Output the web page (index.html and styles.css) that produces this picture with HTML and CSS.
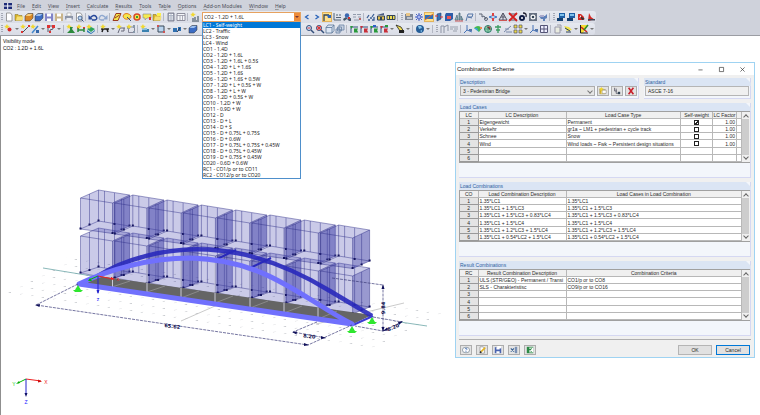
FILE: index.html
```html
<!DOCTYPE html>
<html lang="en">
<head>
<meta charset="utf-8">
<title>Combination Scheme</title>
<link rel="stylesheet" href="styles.css">
</head>
<body>
<header class="chrome">
  <nav class="menu">
    <svg class="app" viewBox="0 0 8 6" aria-hidden="true"><path fill="#1c2a78" d="M0 0h8v6H0z"/><path fill="#fff" d="M0 2.500h8v1H0zM3.200 0h1v6h-1z"/></svg>
    <a href="#"><u>F</u>ile</a><a href="#"><u>E</u>dit</a><a href="#"><u>V</u>iew</a><a href="#"><u>I</u>nsert</a><a href="#"><u>C</u>alculate</a><a href="#"><u>R</u>esults</a><a href="#"><u>T</u>ools</a><a href="#">Ta<u>b</u>le</a><a href="#"><u>O</u>ptions</a><a href="#"><u>A</u>dd-on Modules</a><a href="#"><u>W</u>indow</a><a href="#"><u>H</u>elp</a>
  </nav>
  <div class="bar">
    <div class="tools" data-tools="grip new open box boxb save saveas print preview | undo redo | plane lasso target tag folder | calc grid | load"></div>
    <div class="picker">
      <select class="combo" aria-label="Load case"><option>CO2 - 1.2D + 1.6L</option></select>
      <select class="list" size="26" aria-label="Load cases and combinations">
        <option selected>LC1 - Self-weight</option><option>LC2 - Traffic</option><option>LC3 - Snow</option><option>LC4 - Wind</option><option>CO1 - 1.4D</option><option>CO2 - 1.2D + 1.6L</option><option>CO3 - 1.2D + 1.6L + 0.5S</option><option>CO4 - 1.2D + L + 1.6S</option><option>CO5 - 1.2D + 1.6S</option><option>CO6 - 1.2D + 1.6S + 0.5W</option><option>CO7 - 1.2D + L + 0.5S + W</option><option>CO8 - 1.2D + L + W</option><option>CO9 - 1.2D + 0.5S + W</option><option>CO10 - 1.2D + W</option><option>CO11 - 0.9D + W</option><option>CO12 - D</option><option>CO13 - D + L</option><option>CO14 - D + S</option><option>CO15 - D + 0.75L + 0.75S</option><option>CO16 - D + 0.6W</option><option>CO17 - D + 0.75L + 0.75S + 0.45W</option><option>CO18 - D + 0.75L + 0.45W</option><option>CO19 - D + 0.75S + 0.45W</option><option>CO20 - 0.6D + 0.6W</option><option>RC1 - CO1/p or to CO11</option><option>RC2 - CO12/p or to CO20</option>
      </select>
    </div>
    <div class="tools" data-tools="prev next *loadlbl dims render values | glasses sect1 sect2 | grip card cross *beam cut slab mirror flag | link rotate tri delete sphere camera pig | grip mon mon pdf pdf2"></div>
  </div>
  <div class="bar">
    <div class="tools" data-tools="grip node v line lineb v poly v | figure green solid | hinge v flagb rect | setb v frame v extr v boxb"></div>
    <div class="gap"></div>
    <div class="tools" data-tools="zoom zoomx cube cubes | axx axy axz axr v hand v | globe v | grip portal vals | axis rainbow mesh tree line3 four v axis table | doc pencil v chart v"></div>
  </div>
</header>
<main class="view">
  <svg class="model" viewBox="0 0 455 379" aria-label="Pedestrian bridge model">
    <defs>
      <pattern id="dots" width="11" height="11" patternUnits="userSpaceOnUse" patternTransform="matrix(1 .15 -1 .5 98 240)"><circle cx="2" cy="2" r=".7" fill="#a9acb4"/></pattern>
      <g id="upper"><path class="glass" d="M0 0 18-8 49-3V28L32 35.500 0 31Z"/><path class="side" d="M32 5 49-3V28L32 35.500Z"/><path class="edge" d="M0 0 18-8 49-3 32 5ZM0 0V31L32 35.500V5M49-3V28L32 35.500M18-8V23L0 31M18 23 49 28M9-4V27M24-7V24M34-5V26M41 1V32"/><path class="tips" d="M0 29.500v2M32 34v2M49 26.500v2M18 21.500v2M9 25.500v2M41 30.500v2M34 25v2"/></g>
      <g id="lower"><path class="glass" d="M0 0 18-8 49-3V36L32 43 0 37Z"/><path class="side" d="M32 5 49-3V36L32 43Z"/><path class="edge" d="M0 0 18-8 49-3 32 5ZM0 0V37L32 43V5M49-3V36L32 43M18-8V31L0 37M18 31 49 36M9-4V34M24-7V32M34-5V34M41 1V39"/><path class="tips" d="M0 35.500v2M32 41v2M49 34.500v2M18 29.500v2M9 33v2M41 38v2M34 33v2"/></g>
      <path id="support" fill="#2fe62f" d="M0 0-3 5h6ZM-5 5H5L3 7H-3Z"/>
    </defs>
    <g transform="translate(0 -36)">
      <path fill="url(#dots)" d="M0 293 76 253 452 311 372 352Z"/>
      <path class="thin" stroke="#57999b" d="M43 268 98 277M400 322 427 326"/>
      <path class="thin" stroke="#b5b5b5" d="M181 321 240 295M316 324 404 303"/>
      <g id="lowers"></g>
      <path fill="#656565" d="M79 283 98 276 372 315 353 324Z"/>
      <path class="thin" stroke="#999" d="M112 287 130 281M147 292 165 286M181 298 199 291M215 303 233 296M250 308 268 301M284 313 302 306M318 319 337 311"/>
      <g id="uppers"></g>
      <path fill="none" stroke="#2929bb" stroke-opacity=".9" stroke-width="4.500" d="M98 276C123 260 165 247 208 249.500C262 252 307 277 330 291L372 316"/>
      <path fill="none" stroke="#2929bb" stroke-width="2" d="M215 260 236 250M250 268 271 258"/>
      <path fill="none" stroke="#c9c9d6" d="M112.500 272v16M147 261v31M181 258v39M215 260v42M250 269v38M284 286v27M318 306v12"/>
      <path fill="none" stroke="#3c3cd2" stroke-width="2" d="M353 325 373 316"/>
      <path fill="none" stroke="#7070fd" stroke-width="5" stroke-linejoin="round" d="M352 324 79 284C110 269 150 258 190 258C267 260 300 297 352 324Z"/>
      <use href="#support" x="78" y="285"/><use href="#support" x="352" y="326"/><use href="#support" x="372" y="317"/>
      <g class="dim"><path d="M78 284 36 305 308 345 352 325M317 322 293 332 326 338M332 278 383 285V331L355 326M373 317 402 322 383 331"/></g>
      <path fill="#11115a" d="M35 305 40 304 39.500 307ZM309 345 304 343 304 346ZM292 332 297 331.500 296.500 334.500ZM326 338 321 336 321 339ZM383 284 381.500 289h3ZM383 332 381.500 327h3ZM403 321 398 322 399 325ZM383 331 387 327.500 388 330.500Z"/>
      <g class="num"><text transform="translate(172 328) rotate(8)">65.62</text><text transform="translate(309 338) rotate(8)">8.20</text><text transform="translate(385 308) rotate(-90)">9.84</text><text transform="translate(394 329) rotate(-24)">8.20</text></g>
      <g class="triad"><path stroke="#e22" d="M98 276 113 279"/><path stroke="#0b0" d="M98 276 89 280"/><path stroke="#22c" d="M98 276V293"/><path fill="#e22" d="m115 279-4-2v3z"/><path fill="#0b0" d="m88 281 2-3 2 3z"/><path fill="#22c" d="m98 294-1.500-4h3z"/><text fill="#e22" x="118" y="281">x</text><text fill="#22f" x="98" y="301">z</text></g>
      <g class="triad"><path stroke="#e22" d="M26 379 41 381"/><path stroke="#0b0" d="M26 379 18 383"/><path stroke="#22c" d="M26 379V395"/><path fill="#c11" d="m42 381.500-4-2v3z"/><path fill="#0a0" d="m16 384 3-3 1 2z"/><path fill="#116" d="m26 397-1.500-4h3z"/><text fill="#e22" x="46" y="384">X</text><text fill="#1c1" x="14" y="386">Y</text><text fill="#22f" x="26" y="404">Z</text></g>
    </g>
  </svg>
  <p class="state">Visibility mode<br>CO2 : 1.2D + 1.6L</p>
</main>
<section class="dialog" role="dialog" aria-labelledby="ttl">
  <header class="title"><h1 id="ttl">Combination Scheme</h1>
    <button aria-label="Minimize"><svg viewBox="0 0 6 6"><path d="M.5 3.500h5"/></svg></button><button aria-label="Maximize"><svg viewBox="0 0 6 6"><path d="M.5.500h5v5h-5z"/></svg></button><button aria-label="Close"><svg viewBox="0 0 6 6"><path d="m.5.500 5 5M5.500.500l-5 5"/></svg></button>
  </header>
  <div class="body">
    <div class="top">
      <section class="group grow"><h2><label for="desc">Description</label></h2>
        <div class="row"><select id="desc"><option>3 - Pedestrian Bridge</option></select><button data-icon="newf" aria-label="New"></button><button data-icon="rename" aria-label="Rename"></button><button data-icon="del" aria-label="Delete"></button></div></section>
      <section class="group std"><h2><label for="std">Standard</label></h2><div class="row"><input id="std" value="ASCE 7-16" readonly></div></section>
    </div>
    <section class="group"><h2>Load Cases</h2>
      <div class="sheet"><table><colgroup><col class="n"><col class="d"><col><col class="sw"><col class="f"><col class="e"></colgroup>
        <thead><tr><th>LC</th><th>LC Description</th><th>Load Case Type</th><th>Self-weight</th><th>LC Factor</th><th></th></tr></thead>
        <tbody>
        <tr><th>1</th><td>Eigengewicht</td><td>Permanent</td><td class="c"><input type="checkbox" checked aria-label="Self-weight LC1"></td><td class="r">1.00</td><td></td></tr>
        <tr><th>2</th><td>Verkehr</td><td>gr1a ~ LM1 + pedestrian + cycle track</td><td class="c"><input type="checkbox" aria-label="Self-weight LC2"></td><td class="r">1.00</td><td></td></tr>
        <tr><th>3</th><td>Schnee</td><td>Snow</td><td class="c"><input type="checkbox" aria-label="Self-weight LC3"></td><td class="r">1.00</td><td></td></tr>
        <tr><th>4</th><td>Wind</td><td>Wind loads ~ Fwk ~ Persistent design situations</td><td class="c"><input type="checkbox" aria-label="Self-weight LC4"></td><td class="r">1.00</td><td></td></tr>
        <tr><th>5</th><td></td><td></td><td></td><td></td><td></td></tr>
        <tr><th>6</th><td></td><td></td><td></td><td></td><td></td></tr></tbody></table>
        <div class="scroll"></div></div></section>
    <section class="group"><h2>Load Combinations</h2>
      <div class="sheet"><table><colgroup><col class="n"><col class="d"><col></colgroup>
        <thead><tr><th>CO</th><th>Load Combination Description</th><th>Load Cases in Load Combination</th></tr></thead>
        <tbody>
        <tr><th>1</th><td>1.35*LC1</td><td>1.35*LC1</td></tr>
        <tr><th>2</th><td>1.35*LC1 + 1.5*LC3</td><td>1.35*LC1 + 1.5*LC3</td></tr>
        <tr><th>3</th><td>1.35*LC1 + 1.5*LC3 + 0.83*LC4</td><td>1.35*LC1 + 1.5*LC3 + 0.83*LC4</td></tr>
        <tr><th>4</th><td>1.35*LC1 + 1.5*LC4</td><td>1.35*LC1 + 1.5*LC4</td></tr>
        <tr><th>5</th><td>1.35*LC1 + 1.2*LC3 + 1.5*LC4</td><td>1.35*LC1 + 1.2*LC3 + 1.5*LC4</td></tr>
        <tr><th>6</th><td>1.35*LC1 + 0.54*LC2 + 1.5*LC4</td><td>1.35*LC1 + 0.54*LC2 + 1.5*LC4</td></tr></tbody></table>
        <div class="scroll"></div></div></section>
    <section class="group"><h2>Result Combinations</h2>
      <div class="sheet"><table><colgroup><col class="n"><col class="d"><col></colgroup>
        <thead><tr><th>RC</th><th>Result Combination Description</th><th>Combination Criteria</th></tr></thead>
        <tbody>
        <tr><th>1</th><td>ULS (STR/GEO) - Permanent / Transi</td><td>CO1/p or to CO8</td></tr>
        <tr><th>2</th><td>SLS - Charakteristisc</td><td>CO9/p or to CO16</td></tr>
        <tr><th>3</th><td></td><td></td></tr><tr><th>4</th><td></td><td></td></tr><tr><th>5</th><td></td><td></td></tr><tr><th>6</th><td></td><td></td></tr></tbody></table>
        <div class="scroll"></div></div></section>
    <footer><button data-icon="help" aria-label="Help"></button><button data-icon="edit" aria-label="Edit"></button><button data-icon="saveb" aria-label="Save"></button><button data-icon="xl" aria-label="Import"></button><button data-icon="excel" aria-label="Export to Excel"></button><button class="push ok">OK</button><button class="push cancel">Cancel</button></footer>
  </div>
</section>
<script src="app.js"></script>
</body>
</html>
```
FILE: styles.css
```css
* { box-sizing: border-box; }
body { margin: 0; min-height: 100vh; display: flex; flex-direction: column; background: #fff; color: #2a2a2a; font: 5px/7px "Liberation Sans", Arial, sans-serif; overflow: hidden; }
button, input, select, option { font: inherit; color: inherit; margin: 0; }
svg { display: block; overflow: visible; }

.chrome { background: #cfd2db; border-bottom: 1px solid #9b9da3; position: relative; z-index: 2; }
.menu { display: flex; align-items: center; height: 11px; padding-left: 4px; font: 5px/8px "Noto Sans", sans-serif; }
.menu a { color: #4a4d58; text-decoration: none; margin-right: 7px; }
.menu u { text-underline-offset: 1px; text-decoration-thickness: 1px; text-decoration-color: #999; }
.app { width: 8px; height: 6px; margin-right: 5px; }

.bar { display: flex; align-items: center; width: max-content; height: 12px; border-radius: 0 3px 3px 0; background: linear-gradient(#e6e9f0, #d9dce6); }
.tools { display: flex; align-items: center; }
.tool { width: 10px; height: 10px; padding: 0; border: 0; background: none; }
.tool svg { width: 10px; height: 10px; }
.tool.on { background: #ffe08a; box-shadow: inset 0 0 0 1px #e2b35c; }
.drop { width: 6px; height: 10px; padding: 4px 1px; border: 0; background: none; }
.drop::before { content: ""; display: block; border: solid transparent; border-width: 2px 2px 0; border-top-color: #777; }
.sep { width: 1px; height: 8px; margin: 0 2px 0 1px; background: #b4b8c4; }
.grip { width: 2px; height: 8px; margin: 0 1px; background: repeating-linear-gradient(#a5a9b5 0 1px, transparent 1px 2px); }
.gap { width: 107px; }
.picker { position: relative; width: 99px; margin: 0 1px 0 2px; font-family: "Noto Sans", sans-serif; }
.combo { appearance: none; display: block; width: 100%; height: 10px; padding: 0 8px 0 1px; border: 1px solid #e6a260; border-radius: 0; background: linear-gradient(90deg, #ee8c3a, #ee8c3a) right / 6px 100% no-repeat #fff; line-height: 8px; }
.picker::after { content: ""; position: absolute; right: 2px; top: 4px; border: solid transparent; border-width: 2px 2px 0; border-top-color: #733; }
.list { appearance: none; position: absolute; left: 0; top: 10px; z-index: 5; width: 100%; height: auto; padding: 0; border: 1px solid #4e8fcb; border-top: 0; border-radius: 0; background: #fff; overflow: hidden; outline: 0; scrollbar-width: none; }
.list option { height: 6px; min-height: 0; padding: 0; line-height: 6px; color: #222; }
.list option:checked { color: #fff; background: linear-gradient(#0078d7, #0078d7); }

.view { position: relative; flex: 1; border-left: 1px solid #8f8f8f; }
.model { width: 455px; margin-left: -1px; }
.state { position: absolute; left: 2px; top: 2px; margin: 0; color: #111; }
.glass { fill: #5050b4; fill-opacity: .3; }
.side { fill: #3232a0; fill-opacity: .32; }
.edge { fill: none; stroke: #2c2c86; stroke-width: .6; stroke-opacity: .75; }
.tips { fill: none; stroke: #14145f; stroke-width: 2; }
.thin { fill: none; stroke-width: .7; }
.dim path { fill: none; stroke: #3b3b78; stroke-width: .7; stroke-dasharray: 3 1; }
.num { font: 700 5px "DejaVu Sans", sans-serif; fill: #0c0c4c; text-anchor: middle; }
.triad { font-size: 5px; text-anchor: middle; }

.dialog { position: absolute; z-index: 1; right: 5px; top: 62px; width: 300px; background: #f0f0f0; border: 1px solid #9fd3f2; }
.title { display: flex; align-items: center; height: 12px; background: #fff; padding-left: 1px; }
.title h1 { flex: 1; margin: 0; font: 6px/10px "Liberation Sans", Arial, sans-serif; color: #111; }
.title button { width: 21px; height: 11px; padding: 3px 8px 3px 7px; border: 0; background: none; }
.title svg { width: 5px; height: 5px; fill: none; stroke: #333; stroke-width: .8; }
.body { display: flex; flex-direction: column; gap: 4px; padding: 3px 3px 2px; }
.top { display: flex; gap: 5px; }
.grow { flex: 1; }
.std { width: 107px; }
.group { background: #f3f6fb; border: solid #d5d8f2; border-width: 0 1px 1px 0; padding-bottom: 14px; }
.group h2 { margin: 0 -1px 0 0; height: 8px; padding-left: 1px; background: #dbe5f4; color: #2d619e; font: inherit; line-height: 8px; clip-path: polygon(0 0, calc(100% - 5px) 0, 100% 5px, 100% 100%, 0 100%); }
.top .group { padding-bottom: 2px; }
.row { position: relative; display: flex; gap: 2px; padding: 0 1px; }
.row select { appearance: none; flex: 1; height: 10px; padding: 0 2px; border: 1px solid #adadad; border-radius: 0; background: #e6e6e6; }
.grow .row::before { content: ""; position: absolute; right: 46px; top: 3px; width: 3px; height: 3px; border: solid #777; border-width: 0 1px 1px 0; transform: rotate(45deg); }
.row button, footer button { width: 12px; height: 10px; padding: 0 1px; border: 1px solid #adadad; background: #e3e3e3; }
.row button svg, footer button svg { width: 8px; height: 8px; }
.row input { width: 100%; height: 10px; padding: 0 2px; border: 1px solid #b5b5b5; background: #f0f0f0; }
.sheet { display: flex; height: 52px; border: 1px solid #a0a0a0; border-right: 0; background: #fff; }
table { flex: 1; width: 0; height: 100%; border-collapse: collapse; table-layout: fixed; line-height: 6px; }
.n { width: 18px; } .d { width: 88px; } .sw { width: 32px; } .f { width: 24px; } .e { width: 5px; }
th, td { padding: 0 1px; border: solid #b8b8b8; border-width: 0 1px 1px 0; white-space: nowrap; overflow: hidden; text-align: left; }
th { padding: 0; font-weight: 400; text-align: center; background: #f0f0f0; }
tbody th { background: #e4e4e4; border-color: #999; }
td.r { text-align: right; }
td.c { text-align: center; }
.c input { appearance: none; display: block; width: 5px; height: 5px; margin: 0 auto; border: 1px solid #222; background: #fff; }
.c input:checked { background: linear-gradient(135deg, #fff 40%, #222 40% 70%, #fff 70%); }
.scroll { width: 8px; background: linear-gradient(#cdcdcd, #cdcdcd) 0 7px / 7px 36px no-repeat #f0f0f0; display: flex; flex-direction: column; justify-content: space-between; align-items: center; padding: 3px 1px 3px 0; }
.scroll::before, .scroll::after { content: ""; width: 3px; height: 3px; border: solid #666; border-width: 1px 0 0 1px; transform: rotate(45deg); }
.scroll::after { transform: rotate(225deg); }
footer { display: flex; gap: 4px; margin-top: -1px; padding: 5px 1px 0; border-top: 1px solid #b0b0b0; }
footer .push { width: 34px; border-color: #b5b5b5; background: #e1e1e1; line-height: 8px; }
.ok { margin-left: auto; }
footer .cancel { border: 1px solid #0078d7; }
```
FILE: app.js
```js
const page = '<path fill="#fff" stroke="#777" stroke-width=".7" d="M2.500 1h4l1.500 2v6h-5.500z"/>';
const disk = (c) => `<path fill="${c}" d="M1 1.500h8V9H1z"/><path fill="#fff" d="M3 1.500h4v3H3zM3 6.500h4V9H3z"/>`;
const box = (c, t) => `<path fill="${c}" stroke="#333" stroke-width=".5" d="M1 4 4 1.500h5V6L6 9H1z"/><path fill="${t}" d="M1.500 4 4 2h4.500L6 4z"/>`;
const axis = (c, l) => `<path fill="none" stroke="#35507c" d="M2 9V3h7"/><path fill="${c}" d="M1 2h3l-1.500 3zM5 5l1-1 1 1 1-1 1 1-1 1 1 2-1 1-1-1-1 1-1-1z"/>${l || ""}`;
const star = '<path fill="#f0d830" d="m3 0 .8 1.700L6 2 4.300 3 4 5 3 4 1 4.500 1.800 3 0 2l2-.3z"/>';
const lens = '<circle cx="4" cy="4" r="2.500" fill="#cde4fa" stroke="#35507c"/><path stroke="#35507c" stroke-width="1.500" d="m6 6 3 3"/>';
const monitor = '<path fill="#1d5fa5" d="M3 1h6v5H3z"/><path fill="#7ec0ea" d="M4 2h4v2H4z"/><path fill="#15406f" d="M1 6h6v3H1z"/>';
const folder = '<path fill="#d9b52c" stroke="#7c6a1e" stroke-width=".5" d="M1 8.500v-6h3l1 1h3v5z"/><path fill="#f6df74" d="m2 8.500 1-4h6.500l-1 4z"/>';
const icons = {
  new: page, open: folder, box: box("#d98724", "#f8cf7c"), boxb: box("#3b6cc4", "#9cc0f0"),
  save: disk("#8184c8"), saveas: disk("#c9b48a"),
  print: '<path fill="#fff" stroke="#888" stroke-width=".5" d="M3 1h4v3H3z"/><path fill="#8e96a8" d="M1 4h8v3.500H1z"/><path fill="#e8eaf0" d="M2.500 6h5v3h-5z"/>',
  preview: page + '<circle cx="6" cy="6" r="2" fill="#bcd8f5" stroke="#35507c" stroke-width=".8"/><path stroke="#35507c" d="m7.500 7.500 2 2"/>',
  undo: '<path fill="none" stroke="#27489a" stroke-width="1.500" d="M2.500 5.500Q6 2 8 4.500T7 8H4"/><path fill="#27489a" d="M.5 3v4.500H5z"/>',
  redo: '<path fill="none" stroke="#8fa8cf" stroke-width="1.300" d="M7.500 5.500Q4 2 2 4.500T3 8h3"/><path fill="#8fa8cf" d="M9.500 3v4.500H5z"/>',
  plane: '<path fill="#f4e64a" stroke="#9c3a20" d="M1 8.500 4 1.500h5l-3 7z"/><path stroke="#9c3a20" d="M3 6 7.500 3"/>',
  lasso: '<path fill="#f4e64a" stroke="#e07c20" d="M1 4q1-3 4-2.500T9 4 6 7 1 4z"/><path stroke="#35507c" d="m5 5 4 4"/>',
  target: '<circle cx="5" cy="5" r="3" fill="#f4e64a" stroke="#d64a28" stroke-width="1.500"/><path fill="#3a9a3a" d="M4 4h2v2H4z"/>',
  tag: '<path fill="#f4ea50" stroke="#888" stroke-width=".6" d="M1 2h8v4H5L3 8V6H1z"/><path fill="#d33" d="M7 5h2v3H7z"/>',
  folder: folder + '<path fill="#fbf04c" d="M5 1h4v3H5z"/>',
  calc: '<path fill="#aeb6c6" stroke="#667" stroke-width=".7" d="M2 1h6v8H2z"/><path stroke="#fff" d="M3 2.500h4M3 5h4M3 7h4" stroke-dasharray="1 .5"/>',
  grid: '<path fill="#f5f7fa" stroke="#778" stroke-width=".8" d="M1 1.500h8v7H1z"/><path stroke="#889" stroke-width=".7" d="M1 3.500h8M4 3.500v5M6.500 3.500v5"/>',
  load: star + '<path fill="none" stroke="#345" d="M2 9h7M3 6v2M5 5v3M8 4v4"/>',
  prev: '<path fill="none" stroke="#2460b8" stroke-width="1.200" d="M6.500 3 3.500 5l3 2"/>', next: '<path fill="none" stroke="#2460b8" stroke-width="1.200" d="m3.500 3 3 2-3 2"/>',
  loadlbl: '<path fill="none" stroke="#345" stroke-width="1.300" d="M2 9V3h5"/><path fill="#2d64b8" d="M5 3h4v3H6z"/>',
  dims: '<path fill="none" stroke="#456" d="M2 1v7h7M4 3h2M7 3h2M4 5.500h5" stroke-width=".9"/>',
  render: '<path fill="#456" d="M1 7 4 5 6 7 9 6v3H7L5 7 2 9z"/><circle cx="5" cy="3.500" r="2.200" fill="#3c68b0"/><path fill="#c33" d="M6 5h2v2H6z"/>',
  values: '<path stroke="#8a93a5" fill="none" d="M1 2.500h3M5 2.500h4M1 5h3M6 5h3M2 8h5" stroke-width=".9"/><path fill="#b66" d="M7 6h2v2H7z"/>',
  glasses: '<path fill="none" stroke="#3b5f94" stroke-width="1.300" d="M1 6 3 3M4 6h2M6 5 8 2M2 8h2M6 8h2V5"/>',
  sect1: '<path fill="#4a5d84" d="M1 3 8 1v2H1z"/><path fill="#e0bd4e" stroke="#345" d="M1.500 4h7v4h-7z"/><path fill="#345" d="M4 5h2v3H4z"/>',
  sect2: '<path fill="#f0dc54" stroke="#345" d="M1 3.500h8v4H1z"/><path stroke="#345" d="M3.500 3v5M6.500 3v5"/>',
  card: '<path fill="#7c8594" d="M1 2h8v6H1z"/><path fill="#e8c68a" d="M2 1h4v3H2z"/><path stroke="#fff" d="M3 6h5"/>',
  cross: '<path fill="none" stroke="#4761c4" d="M5 1v2M5 7v2M1 5h2M7 5h2M2 2l1 1M7 7l1 1M2 8l1-1M7 3l1-1"/><circle cx="5" cy="5" r="2" fill="#a9b6f0" stroke="#4761c4"/>',
  beam: '<path fill="#2d6dba" d="M1 3h8v4H1z"/><path stroke="#c63" d="M1 8 9 2"/>',
  cut: '<path fill="#3372b5" stroke="#1c3c70" stroke-width=".6" d="m3 2 4-1v6L3 9z"/><path stroke="#d33" d="M1 4h3M6 5h3"/>',
  slab: '<path fill="#2d5ca8" d="M2 1h7v6l-3 2H1V3z"/><path fill="#e55" d="M3 4h4v3H3z"/>',
  mirror: '<path fill="#9bb" stroke="#467" stroke-width=".7" d="M1 8 3 3l1 5zM5 8V1h1v7zM7 8V4l2 4z"/><path stroke="#c55" d="M1 9h8"/>',
  flag: '<path fill="none" stroke="#5677a8" d="M2 9 4 2h5L8 5H4M4 5l4 1"/>',
  link: '<path fill="none" stroke="#5c6575" d="M1 2h3v3l2-1 2 3"/><circle cx="8" cy="7" r="1.500" fill="none" stroke="#5c6575"/>',
  rotate: '<path fill="none" stroke="#3c78c8" d="M1 5q4-3 8 0-4 3-8 0"/><path fill="#d44" d="M4 1h2v3H4zM4 6h2v3H4z"/>',
  tri: '<path fill="none" stroke="#556" d="M5 1 9 8H1zM5 1v7M3 5h4"/><path stroke="#c55" d="M1 8.500h8"/>',
  delete: '<path stroke="#334" stroke-width=".8" d="M1 2h8M1 8h8"/><path stroke="#d42020" stroke-width="1.800" d="m1 1 8 8M9 1 1 9"/>',
  sphere: '<circle cx="4" cy="6" r="3" fill="#111d44"/><path fill="none" stroke="#223" stroke-width="1.300" d="M5 1q4 0 3 4"/><circle cx="4" cy="6" r="1" fill="#fff"/>',
  camera: '<path fill="#667080" d="M1 1h8v8H1z"/><circle cx="5" cy="5" r="2.500" fill="#fff"/><circle cx="5" cy="5" r="1.300" fill="#345"/>',
  pig: '<path fill="#5e80b8" d="M1 4h6l2-2v4L7 7v2H5V7H3z"/><path fill="#aac" d="M2 3h4v2H2z"/>',
  mon: monitor, pdf: '<path fill="#d42a24" d="M2 2h3l3 3v3H2z"/><path fill="#333" d="m4 4 5 3-3 1z"/><path fill="#fff" d="m3 6 2-3v2z"/>', pdf2: '<path fill="#d42a24" d="m3 1 2 4 4 3H6L2 9z"/><path fill="#445" d="M2 7h7v1.500H2z"/>',
  node: star + '<circle cx="5.500" cy="5.500" r="2" fill="#d62828"/>',
  line: star + '<path stroke="#455" d="M2 9 9 2"/><path fill="#d33" d="M1 7h2v2H1zM8 1h2v2H8z"/>', lineb: star + '<path stroke="#48c" stroke-width="1.500" d="M2 9 8 2"/><path fill="#36a" d="M6 6h3v3H6z"/>',
  poly: '<path fill="none" stroke="#556" d="M2 8V2h5v3L4 6v3"/><path fill="#d33" d="M1 1h3v3H1zM6 1h3v3H6zM3 7h2v2H3z"/>',
  figure: star + '<path fill="#2c8a3c" d="M4 3h3l-1 2 3 4H1l3-3z"/>', green: '<path fill="#e33" d="M1 3h2v2H1zM7 3h2v2H7z"/><path stroke="#2c8a3c" stroke-width="1.500" d="M2 4v4M8 4v4M2 6h6"/>' + star,
  solid: '<path fill="#2ea45c" d="m1 5 4-2 4 2-4 3z"/><path fill="#2878b4" d="m1 6 4 3 4-3v1L5 10 1 8z"/>' + star,
  hinge: '<path fill="none" stroke="#222" stroke-width="1.500" d="M1 5h8M2 8l1-3M8 8 7 5"/>' + star, flagb: '<path fill="none" stroke="#667" d="M2 9 4 4h5M5 7h3V4"/>' + star, rect: '<path fill="none" stroke="#889" d="M2.500 3h6v5.500h-6z"/><path fill="#89a" d="M1 2h3v3H1zM7 1h2v3H7zM7 7h2v2H7z"/>' + star,
  setb: '<path fill="#3b82b0" d="M2 5h7v3H2z"/><path fill="#8bc0e0" d="M2 4h5v2H2z"/>' + star, frame: '<path fill="#b9d4ef" stroke="#384858" d="M2 2h6v6H2z"/><path fill="#c55" d="M1 1h2v2H1zM7 7h2v2H7z"/>',
  extr: '<path fill="#2f70b0" d="M1 4h4v4H1zM6 3h3v4H6z"/><path stroke="#235" d="m5 8 3-4"/>',
  zoom: lens + '<path stroke="#d33" d="M2.500 4h3"/>', zoomx: lens + '<path stroke="#d33" stroke-width="1.300" d="m2 2 4 4M6 2 2 6"/>',
  cube: '<path fill="#dce6f4" stroke="#5b7698" stroke-width=".8" d="M1 3.500 3 1h6v5.500L7 9H1zM1 3.500h6V9M7 3.500 9 1"/>', cubes: '<path fill="#c8d2e2" stroke="#6b83a4" stroke-width=".8" d="M4 1h5v5H4zM2.500 3h4v4h-4zM1 5h4v4H1z"/>',
  axx: axis("#2a9a3c"), axy: axis("#c8303a"), axz: axis("#2a9a3c", '<path fill="#2a62c8" d="M4 1h3v2H4z"/>'), axr: axis("#c8303a", '<path fill="#2a9a3c" d="M6 1h3v2H6z"/>'),
  hand: '<path fill="#f0dc54" stroke="#222" stroke-width=".8" d="m1 1 5 2 3 5-4-1z"/><path fill="#222" d="M4 6h5v3H4z"/>',
  globe: '<circle cx="5" cy="5" r="4" fill="#245d98"/><path fill="#86c5ea" d="M3 2h3l1 2-3 1zM5 7l2-1v2z"/>',
  portal: '<path fill="none" stroke="#8c93a4" d="M2 9V2h3v7M5 3l4-2v6"/>', vals: '<path fill="none" stroke="#999fac" d="M1 3h8M1 5h3M5 5h4M4 7h4"/>',
  axis: '<path fill="none" stroke="#4673b8" d="M4 1v5L1 9M4 6l5 2"/><path fill="#57a" d="M6 5h3v2H6z"/>', rainbow: '<path fill="#45b84e" d="M1 4q4-4 8 0L6 8z"/><path fill="#3aa0e0" d="M1 4h3l2 4z"/><path fill="#e85" d="M7 3h2v2H7z"/>',
  mesh: '<circle cx="5" cy="5" r="3.500" fill="#8ed0a8" stroke="#2f7d6c"/><path stroke="#d55" d="M4 3h3v3"/><path stroke="#2f7d6c" d="M1 5h8M5 1v8" stroke-width=".6"/>',
  tree: '<path fill="none" stroke="#3c9c60" stroke-width="1.300" d="M2 3h6M5 1v8M3 6h4"/>', line3: '<path fill="none" stroke="#7888a8" d="M1 8 8 2M2 5h4M3 8h6"/>',
  four: '<path fill="#f0dc44" stroke="#556" stroke-width=".7" d="M1 1h3v3H1zM6 1h3v3H6zM1 6h3v3H1zM6 6h3v3H6z"/>', table: '<path fill="#eef" stroke="#557" d="M1.500 1.500h7v7h-7zM1.500 5h7M5 1.500v7"/>',
  doc: '<path fill="#e9ebe0" stroke="#99a" d="M2 3h5v6H2zM4 1h4v6"/>', pencil: '<path fill="#f0e34a" d="m1 2 5 1 3 3-5 1z"/><path stroke="#345" d="M3 8h5M2 4l5 3"/>',
  chart: '<path fill="#f2dc30" d="M1 1h8L4 9H1z"/><path stroke="#c22" stroke-width="1.500" d="m2 3 6 5"/><path stroke="#2a8a2a" stroke-width="1.500" d="M9 1 5 6"/><path fill="none" stroke="#222" d="M1.500 1v8H9"/>',
  newf: folder + '<path fill="#fff" stroke="#667" stroke-width=".5" d="M4 4h5v4H4z"/>' + star, rename: '<path fill="none" stroke="#556" d="M2 1v4h3M4 2v6h2"/><path fill="#345" d="M6 6h3v3H6z"/>',
  del: '<path stroke="#c8202c" stroke-width="2" d="m2 1 6 8M8 1 2 9"/>', help: '<ellipse cx="5" cy="5" rx="4.500" ry="3.500" fill="#fff" stroke="#678" stroke-width=".8"/><path fill="none" stroke="#2b5ca8" d="M4 4q0-1.300 1.200-1.200T6 4.500L5 5.500M5 6.500v1"/>',
  edit: page + '<path stroke="#e5b320" stroke-width="2" d="m4 7 5-5"/><path fill="#222" d="m2 9 1-3 2 2z"/>', saveb: disk("#4a64b0") + '<path fill="#fff" d="M4 0h5v3H4z"/>', xl: '<path stroke="#345f94" stroke-width="1.300" d="m1 3 4 4M5 3 1 7"/><path fill="#7990b4" d="M6 1h3v8H6z"/>',
  excel: '<path fill="#2b8a45" d="M1 1h8v8H1z"/><path fill="#fff" d="M4 2h5v6H4z"/><path stroke="#2b8a45" stroke-width="1.300" d="m3 3 4 4M7 3 3 7"/>'
};
const svg = (n) => `<svg viewBox="0 0 10 10" aria-hidden="true">${icons[n]}</svg>`;

document.querySelectorAll("[data-tools]").forEach((bar) => {
  bar.innerHTML = bar.dataset.tools.split(" ").map((t) => {
    if (t === "|") return '<span class="sep"></span>';
    if (t === "grip") return '<span class="grip"></span>';
    if (t === "v") return '<button class="drop" aria-label="More"></button>';
    const name = t.replace("*", "");
    return `<button class="tool${t[0] === "*" ? " on" : ""}" aria-label="${name}">${svg(name)}</button>`;
  }).join("");
});
document.querySelectorAll("[data-icon]").forEach((b) => { b.innerHTML = svg(b.dataset.icon); });

const row = (id, shape, y) => {
  let out = "";
  for (let i = 0; i < 8; i++) out += `<use href="#${shape}" x="${80.5 + i * 34.3}" y="${y + i * 5}"/>`;
  document.getElementById(id).innerHTML = out;
};
row("uppers", "upper", 198);
row("lowers", "lower", 236);
```
